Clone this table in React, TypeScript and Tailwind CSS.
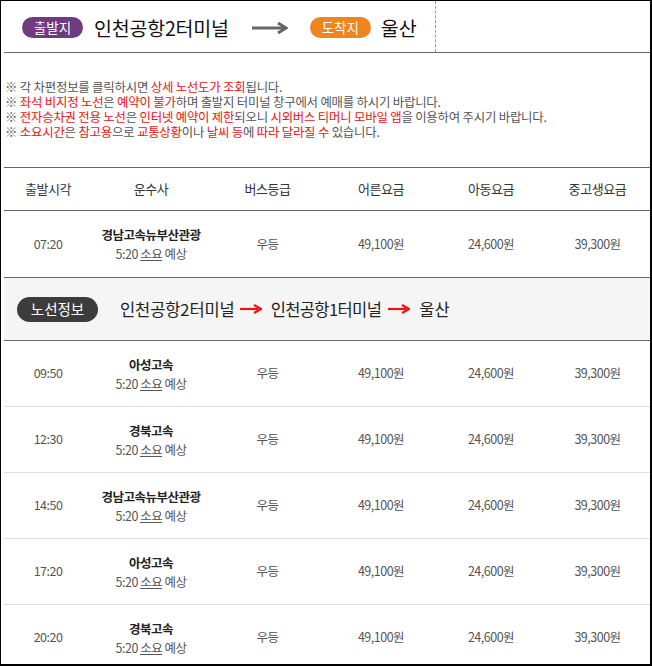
import React from "react";

const FONT = { fontFamily: '"Noto Sans CJK KR", "Noto Sans", sans-serif' };

const rows = [
  { time: "07:20", co: "경남고속뉴부산관광" },
  { time: "09:50", co: "아성고속" },
  { time: "12:30", co: "경북고속" },
  { time: "14:50", co: "경남고속뉴부산관광" },
  { time: "17:20", co: "아성고속" },
  { time: "20:20", co: "경북고속" },
];

const R = ({ children }: { children: React.ReactNode }) => (
  <span className="text-[#ee1111]">{children}</span>
);

function RedArrow({ cls }: { cls: string }) {
  return (
    <svg width="22" height="10" viewBox="0 0 22 10" className={cls}>
      <line x1="0" y1="5" x2="18" y2="5" stroke="#ee1111" strokeWidth="2.2" />
      <path d="M14 1 L21 5 L14 9" fill="none" stroke="#ee1111" strokeWidth="2.2" />
    </svg>
  );
}

function DataRow({ time, co }: { time: string; co: string }) {
  return (
    <div className="grid grid-cols-[88px_118px_115px_112px_108px_105px] h-[66px] items-center border-b border-[#dddddd] text-[12.5px] text-[#555] tracking-[-0.5px]">
      <div className="text-center">{time}</div>
      <div className="text-center leading-[19px]">
        <div className="font-bold text-[#222]">{co}</div>
        <div>
          5:20 <span className="underline">소요</span> 예상
        </div>
      </div>
      <div className="text-center">우등</div>
      <div className="text-center">49,100원</div>
      <div className="text-center">24,600원</div>
      <div className="text-center">39,300원</div>
    </div>
  );
}

export default function App() {
  return (
    <div
      style={FONT}
      className="w-[652px] h-[666px] bg-white border-l border-t border-r-2 border-b-2 border-black overflow-hidden pl-[3px]"
    >
      {/* header */}
      <div className="flex h-[52px] border-b border-[#666]">
        <div className="w-[432px] border-r border-dashed border-[#999] flex items-center pl-[18px] pt-[2px]">
          <span className="inline-flex items-center justify-center w-[61px] h-[21px] rounded-full bg-[#6e3b7f] text-white text-[13.5px]">
            출발지
          </span>
          <span className="ml-[11px] text-[19.5px] text-[#111] tracking-[-0.2px]">인천공항2터미널</span>
          <svg width="36" height="12" viewBox="0 0 36 12" className="ml-[23px]">
            <line x1="0" y1="6" x2="32" y2="6" stroke="#666" strokeWidth="3" />
            <path d="M26 1 L34 6 L26 11" fill="none" stroke="#666" strokeWidth="3" />
          </svg>
          <span className="ml-[22px] inline-flex items-center justify-center w-[61px] h-[21px] rounded-full bg-[#f0841e] text-white text-[13.5px]">
            도착지
          </span>
          <span className="ml-[10px] text-[19.5px] text-[#111]">울산</span>
        </div>
      </div>

      {/* notices */}
      <div className="pt-[27px] pb-[27px] pl-[1px] text-[12.4px] leading-[15px] text-[#555] tracking-[-0.2px] whitespace-nowrap">
        <div>
          ※ 각 차편정보를 클릭하시면 <R>상세 노선도가 조회</R>됩니다.
        </div>
        <div>
          ※ <R>좌석 비지정 노선</R>은 <R>예약이 불가</R>하며 출발지 터미널 창구에서 예매를 하시기 바랍니다.
        </div>
        <div>
          ※ <R>전자승차권 전용 노선</R>은 <R>인터넷 예약이 제한</R>되오니 <R>시외버스 티머니 모바일 앱</R>을 이용하여 주시기 바랍니다.
        </div>
        <div>
          ※ <R>소요시간</R>은 <R>참고용</R>으로 <R>교통상황</R>이나 <R>날씨 등</R>에 <R>따라 달라질 수</R> 있습니다.
        </div>
      </div>

      {/* table header */}
      <div className="grid grid-cols-[88px_118px_115px_112px_108px_105px] h-[44px] items-center border-t border-b border-[#666] text-[13px] text-[#333] tracking-[-0.4px]">
        <div className="text-center">출발시각</div>
        <div className="text-center">운수사</div>
        <div className="text-center">버스등급</div>
        <div className="text-center">어른요금</div>
        <div className="text-center">아동요금</div>
        <div className="text-center">중고생요금</div>
      </div>

      <div className="[&>div]:border-b-0">
        <DataRow {...rows[0]} />
      </div>

      {/* route info */}
      <div className="flex items-center h-[64px] bg-[#f5f5f5] border-t border-b border-[#666]">
        <span className="ml-[13px] inline-flex items-center justify-center w-[81px] h-[25px] rounded-full bg-[#3c3c3c] text-white text-[14.5px]">
          노선정보
        </span>
        <span className="ml-[22px] text-[16.5px] text-[#222] tracking-[-0.1px]">인천공항2터미널</span>
        <RedArrow cls="ml-[5px] mr-[9px]" />
        <span className="text-[16.5px] text-[#222] tracking-[-0.6px]">인천공항1터미널</span>
        <RedArrow cls="ml-[7px] mr-[9px]" />
        <span className="text-[16.5px] text-[#222]">울산</span>
      </div>

      {rows.slice(1).map((r) => (
        <DataRow key={r.time} {...r} />
      ))}
    </div>
  );
}
